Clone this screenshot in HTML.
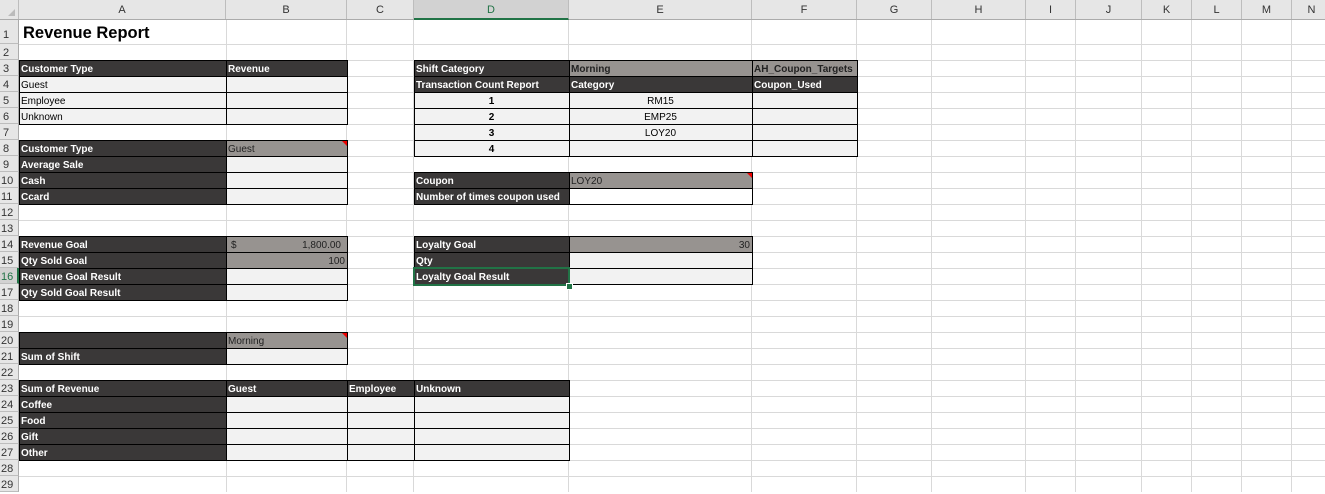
<!DOCTYPE html>
<html><head><meta charset="utf-8"><style>
*{margin:0;padding:0}
body{width:1325px;height:491px;overflow:hidden;background:#fff;position:relative;font-family:"Liberation Sans",sans-serif}
#w{position:absolute;left:0;top:1px;width:1325px;height:490px}
.grid{position:absolute;left:0;top:43px;width:1325px;height:448px;background:repeating-linear-gradient(to bottom,#d9d9d9 0,#d9d9d9 1px,transparent 1px,transparent 16px)}
.v{position:absolute;top:19px;width:1px;height:472px;background:#d9d9d9}
.hdr{position:absolute;left:0;top:0;width:1325px;height:20px;background:#e6e6e6;border-bottom:1px solid #ababab;box-sizing:border-box}
.ch{position:absolute;top:0;height:19px;line-height:20px;text-align:center;font-size:11px;color:#333;border-right:1px solid #bdbdbd;box-sizing:border-box}
.rh{position:absolute;left:0;width:19px;background:#e6e6e6;border-bottom:1px solid #bdbdbd;border-right:1px solid #ababab;box-sizing:border-box;font-size:11px;color:#333;text-align:left;padding-left:3px;line-height:18px}
.c{position:absolute;box-sizing:border-box;border:1px solid #000;height:17px;font-size:10px;line-height:17px;padding:0 2px 0 1px;white-space:nowrap;overflow:hidden}
.d{background:#3a3838;color:#fff;font-weight:bold}
.g{background:#979390;color:#222}
.gb{background:#979390;color:#fff;font-weight:bold}
.l{background:#f2f2f2;color:#000}
.w{background:#fff}
.ctr{text-align:center}.r{text-align:right}.b{font-weight:bold}
.tri{position:absolute;right:0;top:0;width:0;height:0;border-top:5px solid #e00;border-left:5px solid transparent}
</style></head><body>
<div id="w">
<div class="grid"></div>
<div class="v" style="left:226px"></div><div class="v" style="left:346px"></div><div class="v" style="left:413px"></div><div class="v" style="left:568px"></div><div class="v" style="left:751px"></div><div class="v" style="left:856px"></div><div class="v" style="left:931px"></div><div class="v" style="left:1025px"></div><div class="v" style="left:1075px"></div><div class="v" style="left:1141px"></div><div class="v" style="left:1191px"></div><div class="v" style="left:1241px"></div><div class="v" style="left:1291px"></div>
<div style="position:absolute;left:0;top:19px;width:1325px;height:24px;background:#fff;border-bottom:1px solid #d9d9d9"></div>
<div class="v" style="left:226px;top:19px;height:24px"></div><div class="v" style="left:346px;top:19px;height:24px"></div><div class="v" style="left:413px;top:19px;height:24px"></div><div class="v" style="left:568px;top:19px;height:24px"></div><div class="v" style="left:751px;top:19px;height:24px"></div><div class="v" style="left:856px;top:19px;height:24px"></div><div class="v" style="left:931px;top:19px;height:24px"></div><div class="v" style="left:1025px;top:19px;height:24px"></div><div class="v" style="left:1075px;top:19px;height:24px"></div><div class="v" style="left:1141px;top:19px;height:24px"></div><div class="v" style="left:1191px;top:19px;height:24px"></div><div class="v" style="left:1241px;top:19px;height:24px"></div><div class="v" style="left:1291px;top:19px;height:24px"></div>
<div style="position:absolute;left:23px;top:23px;font-size:16.5px;font-weight:bold;color:#000">Revenue Report</div>

<div class="rh" style="top:19px;height:24px;line-height:30px">1</div>
<div class="rh" style="top:43px;height:16px">2</div><div class="rh" style="top:59px;height:16px">3</div><div class="rh" style="top:75px;height:16px">4</div><div class="rh" style="top:91px;height:16px">5</div><div class="rh" style="top:107px;height:16px">6</div><div class="rh" style="top:123px;height:16px">7</div><div class="rh" style="top:139px;height:16px">8</div><div class="rh" style="top:155px;height:16px">9</div><div class="rh" style="top:171px;height:16px;padding-left:1px">10</div><div class="rh" style="top:187px;height:16px;padding-left:1px">11</div><div class="rh" style="top:203px;height:16px;padding-left:1px">12</div><div class="rh" style="top:219px;height:16px;padding-left:1px">13</div><div class="rh" style="top:235px;height:16px;padding-left:1px">14</div><div class="rh" style="top:251px;height:16px;padding-left:1px">15</div><div class="rh" style="top:267px;height:16px;padding-left:1px;background:#d2d2d2;color:#217346;border-right:2px solid #217346">16</div><div class="rh" style="top:283px;height:16px;padding-left:1px">17</div><div class="rh" style="top:299px;height:16px;padding-left:1px">18</div><div class="rh" style="top:315px;height:16px;padding-left:1px">19</div><div class="rh" style="top:331px;height:16px;padding-left:1px">20</div><div class="rh" style="top:347px;height:16px;padding-left:1px">21</div><div class="rh" style="top:363px;height:16px;padding-left:1px">22</div><div class="rh" style="top:379px;height:16px;padding-left:1px">23</div><div class="rh" style="top:395px;height:16px;padding-left:1px">24</div><div class="rh" style="top:411px;height:16px;padding-left:1px">25</div><div class="rh" style="top:427px;height:16px;padding-left:1px">26</div><div class="rh" style="top:443px;height:16px;padding-left:1px">27</div><div class="rh" style="top:459px;height:16px;padding-left:1px">28</div><div class="rh" style="top:475px;height:16px;padding-left:1px">29</div>

<div class="c d" style="left:19px;top:59px;width:208px">Customer Type</div>
<div class="c d" style="left:226px;top:59px;width:122px">Revenue</div>
<div class="c l" style="left:19px;top:75px;width:208px">Guest</div><div class="c l" style="left:226px;top:75px;width:122px"></div>
<div class="c l" style="left:19px;top:91px;width:208px">Employee</div><div class="c l" style="left:226px;top:91px;width:122px"></div>
<div class="c l" style="left:19px;top:107px;width:208px">Unknown</div><div class="c l" style="left:226px;top:107px;width:122px"></div>

<div class="c d" style="left:19px;top:139px;width:208px">Customer Type</div>
<div class="c g" style="left:226px;top:139px;width:122px">Guest<span class="tri"></span></div>
<div class="c d" style="left:19px;top:155px;width:208px">Average Sale</div><div class="c l" style="left:226px;top:155px;width:122px"></div>
<div class="c d" style="left:19px;top:171px;width:208px">Cash</div><div class="c l" style="left:226px;top:171px;width:122px"></div>
<div class="c d" style="left:19px;top:187px;width:208px">Ccard</div><div class="c l" style="left:226px;top:187px;width:122px"></div>

<div class="c d" style="left:19px;top:235px;width:208px">Revenue Goal</div>
<div class="c g" style="left:226px;top:235px;width:122px"><span style="float:left;padding-left:3px">$</span><span style="float:right;padding-right:4px">1,800.00</span></div>
<div class="c d" style="left:19px;top:251px;width:208px">Qty Sold Goal</div>
<div class="c g r" style="left:226px;top:251px;width:122px">100</div>
<div class="c d" style="left:19px;top:267px;width:208px">Revenue Goal Result</div><div class="c l" style="left:226px;top:267px;width:122px"></div>
<div class="c d" style="left:19px;top:283px;width:208px">Qty Sold Goal Result</div><div class="c l" style="left:226px;top:283px;width:122px"></div>

<div class="c d" style="left:19px;top:331px;width:208px"></div>
<div class="c g" style="left:226px;top:331px;width:122px">Morning<span class="tri"></span></div>
<div class="c d" style="left:19px;top:347px;width:208px">Sum of Shift</div><div class="c l" style="left:226px;top:347px;width:122px"></div>

<div class="c d" style="left:19px;top:379px;width:208px">Sum of Revenue</div>
<div class="c d" style="left:226px;top:379px;width:122px">Guest</div>
<div class="c d" style="left:347px;top:379px;width:68px">Employee</div>
<div class="c d" style="left:414px;top:379px;width:156px">Unknown</div>
<div class="c d" style="left:19px;top:395px;width:208px">Coffee</div><div class="c l" style="left:226px;top:395px;width:122px"></div><div class="c l" style="left:347px;top:395px;width:68px"></div><div class="c l" style="left:414px;top:395px;width:156px"></div>
<div class="c d" style="left:19px;top:411px;width:208px">Food</div><div class="c l" style="left:226px;top:411px;width:122px"></div><div class="c l" style="left:347px;top:411px;width:68px"></div><div class="c l" style="left:414px;top:411px;width:156px"></div>
<div class="c d" style="left:19px;top:427px;width:208px">Gift</div><div class="c l" style="left:226px;top:427px;width:122px"></div><div class="c l" style="left:347px;top:427px;width:68px"></div><div class="c l" style="left:414px;top:427px;width:156px"></div>
<div class="c d" style="left:19px;top:443px;width:208px">Other</div><div class="c l" style="left:226px;top:443px;width:122px"></div><div class="c l" style="left:347px;top:443px;width:68px"></div><div class="c l" style="left:414px;top:443px;width:156px"></div>

<div class="c d" style="left:414px;top:59px;width:156px">Shift Category</div>
<div class="c g b" style="left:569px;top:59px;width:184px">Morning</div>
<div class="c g b" style="left:752px;top:59px;width:106px">AH_Coupon_Targets</div>
<div class="c d" style="left:414px;top:75px;width:156px">Transaction Count Report</div>
<div class="c d" style="left:569px;top:75px;width:184px">Category</div>
<div class="c d" style="left:752px;top:75px;width:106px">Coupon_Used</div>
<div class="c l ctr b" style="left:414px;top:91px;width:156px">1</div><div class="c l ctr" style="left:569px;top:91px;width:184px">RM15</div><div class="c l" style="left:752px;top:91px;width:106px"></div>
<div class="c l ctr b" style="left:414px;top:107px;width:156px">2</div><div class="c l ctr" style="left:569px;top:107px;width:184px">EMP25</div><div class="c l" style="left:752px;top:107px;width:106px"></div>
<div class="c l ctr b" style="left:414px;top:123px;width:156px">3</div><div class="c l ctr" style="left:569px;top:123px;width:184px">LOY20</div><div class="c l" style="left:752px;top:123px;width:106px"></div>
<div class="c l ctr b" style="left:414px;top:139px;width:156px">4</div><div class="c l ctr" style="left:569px;top:139px;width:184px"></div><div class="c l" style="left:752px;top:139px;width:106px"></div>

<div class="c d" style="left:414px;top:171px;width:156px">Coupon</div>
<div class="c g" style="left:569px;top:171px;width:184px">LOY20<span class="tri"></span></div>
<div class="c d" style="left:414px;top:187px;width:156px">Number of times coupon used</div>
<div class="c w" style="left:569px;top:187px;width:184px"></div>

<div class="c d" style="left:414px;top:235px;width:156px">Loyalty Goal</div>
<div class="c g r" style="left:569px;top:235px;width:184px">30</div>
<div class="c d" style="left:414px;top:251px;width:156px">Qty</div><div class="c l" style="left:569px;top:251px;width:184px"></div>
<div class="c d" style="left:414px;top:267px;width:156px">Loyalty Goal Result</div><div class="c l" style="left:569px;top:267px;width:184px"></div>
<div style="position:absolute;left:413px;top:266px;width:157px;height:19px;border:2px solid #217346;box-sizing:border-box"></div>
<div style="position:absolute;left:566px;top:282px;width:5px;height:5px;background:#217346;border:1px solid #fff"></div>
</div>

<div class="hdr"></div>
<div class="ch" style="left:0;width:19px"><span style="position:absolute;right:3px;bottom:3px;border-bottom:7px solid #bbb;border-left:7px solid transparent"></span></div>
<div class="ch" style="left:19px;width:207px">A</div>
<div class="ch" style="left:226px;width:121px">B</div>
<div class="ch" style="left:347px;width:67px">C</div>
<div class="ch" style="left:414px;width:155px;background:#d2d2d2;color:#217346;border-bottom:2px solid #217346;height:20px">D</div>
<div class="ch" style="left:569px;width:183px">E</div>
<div class="ch" style="left:752px;width:105px">F</div>
<div class="ch" style="left:857px;width:75px">G</div>
<div class="ch" style="left:932px;width:94px">H</div>
<div class="ch" style="left:1026px;width:50px">I</div>
<div class="ch" style="left:1076px;width:66px">J</div>
<div class="ch" style="left:1142px;width:50px">K</div>
<div class="ch" style="left:1192px;width:50px">L</div>
<div class="ch" style="left:1242px;width:50px">M</div>
<div class="ch" style="left:1292px;width:40px">N</div>
</body></html>
